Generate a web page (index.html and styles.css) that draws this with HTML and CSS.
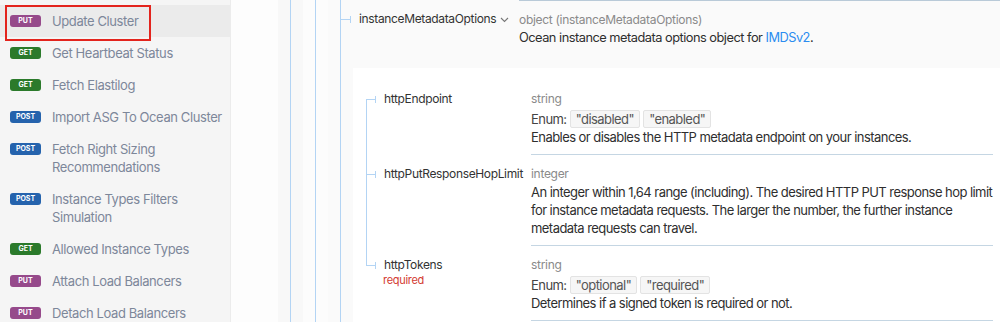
FILE: index.html
```html
<!DOCTYPE html>
<html lang="en">
<head>
  <meta charset="UTF-8" />
  <meta name="viewport" content="width=device-width, initial-scale=1.0"/>
  <title>Ocean API - Update Cluster</title>
  <link rel="stylesheet" href="styles.css">
</head>
<body>
  <div class="page">
    <nav class="sidebar">
      <a class="item active"><span class="badge put">put</span><span class="label">Update Cluster</span></a>
      <a class="item"><span class="badge get">get</span><span class="label">Get Heartbeat Status</span></a>
      <a class="item"><span class="badge get">get</span><span class="label">Fetch Elastilog</span></a>
      <a class="item"><span class="badge post">post</span><span class="label">Import ASG To Ocean Cluster</span></a>
      <a class="item"><span class="badge post">post</span><span class="label">Fetch Right Sizing Recommendations</span></a>
      <a class="item"><span class="badge post">post</span><span class="label">Instance Types Filters Simulation</span></a>
      <a class="item"><span class="badge get">get</span><span class="label">Allowed Instance Types</span></a>
      <a class="item"><span class="badge put">put</span><span class="label">Attach Load Balancers</span></a>
      <a class="item"><span class="badge put">put</span><span class="label">Detach Load Balancers</span></a>
    </nav>

    <main class="content">
      <div class="nest n1"><div class="tree">
        <div class="nest n2"><div class="tree">
          <div class="nest n3"><div class="tree">

            <div class="prop top">
              <div class="pname">
                <span class="tick"></span>
                <span class="name">instanceMetadataOptions</span>
                <svg class="chev" width="9" height="6" viewBox="0 0 9 6"><polyline points="1,1 4.5,4.5 8,1" fill="none" stroke="#777" stroke-width="1.1"/></svg>
              </div>
              <div class="pdetail">
                <div class="type">object (instanceMetadataOptions)</div>
                <div class="desc">Ocean instance metadata options object for <a class="link">IMDSv2</a>.</div>
              </div>
            </div>

            <div class="sub">
              <div class="prop first">
                <div class="pname">
                  <span class="tick"></span>
                  <div><div class="name">httpEndpoint</div></div>
                </div>
                <div class="pdetail">
                  <div class="type">string</div>
                  <div class="enum">Enum: <span class="tag">"disabled"</span> <span class="tag">"enabled"</span></div>
                  <div class="desc">Enables or disables the HTTP metadata endpoint on your instances.</div>
                </div>
              </div>

              <div class="prop">
                <div class="pname">
                  <span class="tick"></span>
                  <div><div class="name">httpPutResponseHopLimit</div></div>
                </div>
                <div class="pdetail">
                  <div class="type">integer</div>
                  <div class="desc">An integer within 1,64 range (including). The desired HTTP PUT response hop limit for instance metadata requests. The larger the number, the further instance metadata requests can travel.</div>
                </div>
              </div>

              <div class="prop last">
                <div class="pname">
                  <span class="tick"></span>
                  <div>
                    <div class="name">httpTokens</div>
                    <div class="req">required</div>
                  </div>
                </div>
                <div class="pdetail">
                  <div class="type">string</div>
                  <div class="enum">Enum: <span class="tag">"optional"</span> <span class="tag">"required"</span></div>
                  <div class="desc">Determines if a signed token is required or not.</div>
                </div>
              </div>
            </div>

          </div></div>
        </div></div>
      </div></div>
    </main>
  </div>
</body>
</html>
```

FILE: styles.css
```css
* {
  box-sizing: border-box;
}
body {
  margin: 0;
  font-family: Inter, "Noto Sans", sans-serif;
  font-size: 13px;
  line-height: 18px;
  letter-spacing: -0.55px;
  color: #2e2e2e;
  background: #fdfdfd;
  overflow: hidden;
}
.page {
  display: flex;
  height: 322px;
}

/* sidebar */
.sidebar {
  width: 231px;
  flex: none;
  padding-top: 5px;
  background: #f5f5f5;
  border-right: 1px solid #ececec;
}
.item {
  display: flex;
  align-items: flex-start;
  gap: 11px;
  padding: 7px 6px 7px 10px;
  color: #7d879a;
  letter-spacing: -0.4px;
  position: relative;
}
.item.active {
  background: #ebebeb;
}
.item.active::after {
  content: "";
  position: absolute;
  left: 5px;
  top: 0;
  width: 142px;
  height: 32px;
  border: 2px solid #e3241d;
}
.badge {
  flex: none;
  width: 31px;
  height: 12px;
  margin-top: 3px;
  border-radius: 3px;
  color: #fff;
  font-size: 7px;
  font-weight: 700;
  line-height: 12px;
  letter-spacing: 0;
  text-align: center;
  text-transform: uppercase;
}
.badge.put { background: #964a8b; }
.badge.get { background: #2b7a2b; }
.badge.post { background: #2563ad; }

/* schema tree */
.content {
  flex: 1;
  padding-left: 47px;
  overflow: hidden;
}
.nest {
  padding-left: 12px;
  height: 100%;
}
.n1 { background: #f8f8f8; }
.n2 { background: #fcfcfc; }
.n3 { background: #fafafa; }
.tree {
  border-left: 1px solid #b3d4f4;
  padding-left: 12px;
  height: 100%;
}
.n3 > .tree {
  padding-left: 0;
}
.prop {
  display: grid;
  grid-template-columns: 178px 1fr;
}
.pname {
  display: flex;
  align-items: flex-start;
  padding-top: 10px;
}
.tick {
  flex: none;
  width: 10px;
  height: 7px;
  margin: 6px 8px 0 0;
  border-right: 1px solid #b3d4f4;
  background: linear-gradient(#b3d4f4, #b3d4f4) 0 3px / 100% 1px no-repeat;
}
.name {
  color: #333;
  font-size: 12px;
  letter-spacing: -0.35px;
}
.chev {
  margin: 7px 0 0 4px;
}
.pdetail {
  padding: 10px 0 8px;
}
.top .pdetail {
  border-top: 1px solid #b9cad8;
}
.top .desc {
  font-size: 12.8px;
  letter-spacing: -0.5px;
}
.type {
  color: #8a8a8a;
  font-size: 12px;
  letter-spacing: -0.3px;
}
.desc {
  margin-right: -10px;
}
.link {
  color: #2b8cf0;
}

.sub {
  margin: 13px 0 0 12px;
  padding: 12px 7px 0 13px;
  background: #fff;
  height: 100%;
}
.sub .prop {
  grid-template-columns: 165px 1fr;
}
.sub .pname {
  background: linear-gradient(#b3d4f4, #b3d4f4) 0 0 / 1px 100% no-repeat;
}
.sub .first .pname {
  background-position: 0 19px;
}
.sub .last .pname {
  background-size: 1px 20px;
}
.sub .pdetail {
  border-bottom: 1px solid #c5d6e3;
}
.enum {
  margin-top: 2px;
  color: #444;
}
.tag {
  display: inline-block;
  padding: 0 5px;
  line-height: 16px;
  background: #f6f6f6;
  border: 1px solid #e3e3e3;
  border-radius: 2px;
  color: #555;
}
.req {
  color: #d33a32;
  font-size: 11px;
  line-height: 12px;
  letter-spacing: -0.3px;
  margin-left: -1px;
}
```
